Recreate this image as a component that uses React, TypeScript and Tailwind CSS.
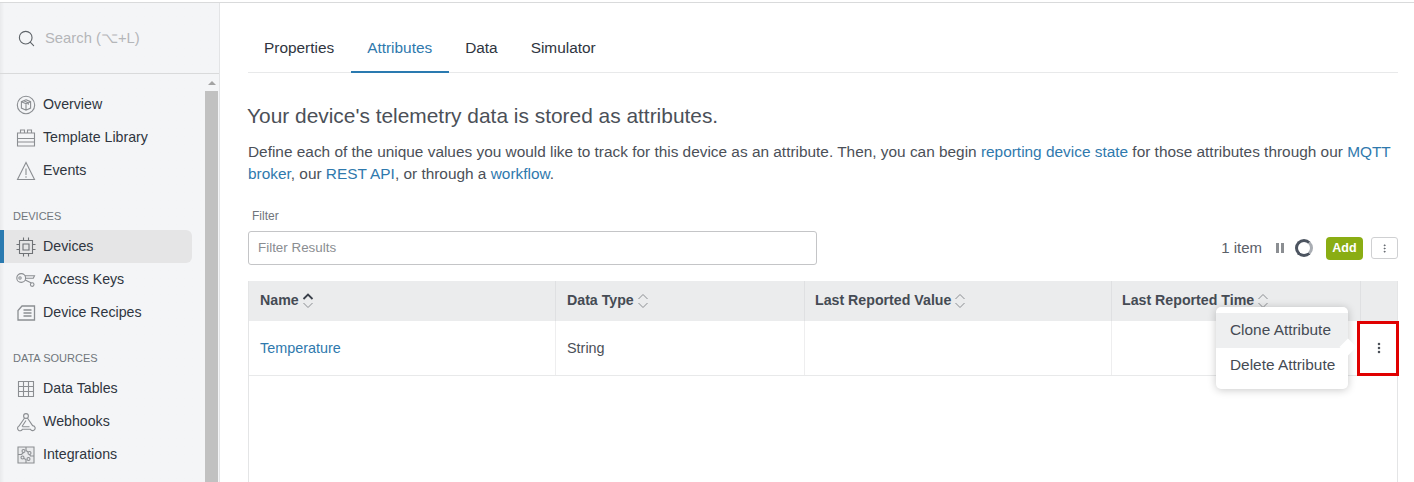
import React from 'react';
import { MoreVertical, Search } from 'lucide-react';

const stroke = { fill: 'none', stroke: 'currentColor', strokeWidth: 1.1 };

const icons: Record<string, React.ReactNode> = {
  overview: (
    <g {...stroke}>
      <circle cx="10" cy="10" r="8.7" />
      <path d="M10 4.8l4.6 1.9v6.4L10 15.2l-4.6-2.1V6.7zM5.4 6.7l4.6 2 4.6-2M10 8.7v6.5M7.7 5.8l4.6 2v2" />
    </g>
  ),
  template: (
    <g {...stroke}>
      <path d="M1.5 5h17v5.5h-17zM1.5 10.5h17v7.5h-17zM1.5 14h17M4.5 5V2h4v3M11.5 5V2h4v3" />
    </g>
  ),
  events: (
    <g {...stroke}>
      <path d="M10 1.5L1.5 18.5h17zM10 7.5v6.5M10 15.3v1.4" />
    </g>
  ),
  devices: (
    <g {...stroke}>
      <path d="M3.5 3.5h13v13h-13zM7 7h6v6H7zM7.5 .5v3M12.5 .5v3M7.5 16.5v3M12.5 16.5v3M.5 7.5h3M.5 12.5h3M16.5 7.5h3M16.5 12.5h3" />
    </g>
  ),
  keys: (
    <g {...stroke}>
      <circle cx="5.2" cy="8" r="4.4" />
      <circle cx="4" cy="8" r="1.2" />
      <path d="M9 5.8h9.5l-1.2 2.4H9.6M9.2 10l6.2 3" />
      <circle cx="16.2" cy="14.6" r="1.8" />
    </g>
  ),
  recipes: (
    <g {...stroke} strokeWidth={1.3}>
      <path d="M6 3h12.5v14H2V7.5zM7.5 7h8M7.5 10h8M7.5 13h8" />
    </g>
  ),
  tables: (
    <g {...stroke}>
      <path d="M2.5 2.5h15v15h-15zM2.5 7.5h15M2.5 12.5h15M7.5 2.5v15M12.5 2.5v15" />
    </g>
  ),
  webhooks: (
    <g {...stroke}>
      <circle cx="10" cy="4" r="2.4" />
      <path d="M8.6 6L3 14a2.5 2.5 0 1 0 3.4 3.2h8a2.5 2.5 0 1 0 2.2-3.6L11.4 6M10 8.5L6 14.5M13.5 14.8H6.5" />
    </g>
  ),
  integrations: (
    <g {...stroke}>
      <path d="M2 2h16v16H2z" fill="#e9eaec" />
      <circle cx="7.5" cy="6" r="1.5" />
      <circle cx="13.5" cy="8" r="1.5" />
      <circle cx="6.5" cy="12.5" r="1.5" />
      <circle cx="12.5" cy="14" r="1.5" />
      <path d="M2 9.5h3.5l2-2M10 2v3.5l2 1.5M18 11h-3.5l-1-1.5M10 18v-3.5l-2-1" />
    </g>
  ),
};

const NavItem = ({ icon, label, active }: { icon: string; label: string; active?: boolean }) => (
  <div className={`flex h-[33px] items-center ${active ? 'border-l-[4px] border-[#2a7ab0]' : 'pl-[4px]'}`}>
    <div className={`flex h-[33px] w-[188px] items-center gap-[8px] rounded-r-md pl-[12px] ${active ? 'bg-[#e5e5e6]' : ''}`}>
      <svg viewBox="0 0 20 20" className={`h-[20px] w-[20px] shrink-0 ${active ? 'text-[#6f7276]' : 'text-[#8b8e92]'}`}>
        {icons[icon]}
      </svg>
      <span className="-ml-[1px] text-[14.2px] text-[#2f3540]">{label}</span>
    </div>
  </div>
);

const Heading = ({ children }: { children: React.ReactNode }) => (
  <div className="pl-[13px] text-[11px] uppercase leading-[14px] text-[#70757b]">{children}</div>
);

const Sort = ({ active }: { active?: boolean }) => (
  <svg viewBox="0 0 12 18" className="ml-[3px] h-[18px] w-[12px] shrink-0" fill="none">
    <path d="M1.5 7L6 2.5 10.5 7" stroke={active ? '#3a404a' : '#8b8e92'} strokeWidth={active ? 1.8 : 1} />
    <path d="M1.5 11L6 15.5 10.5 11" stroke="#8b8e92" strokeWidth="1" />
  </svg>
);

const Th = ({ className, label, active }: { className: string; label: string; active?: boolean }) => (
  <div className={`flex items-center border-r border-[#dfe0e2] text-[14.2px] font-bold text-[#454b54] ${className}`}>
    {label}
    <Sort active={active} />
  </div>
);

const Link = ({ children }: { children: React.ReactNode }) => <span className="text-[#2f79ad]">{children}</span>;

export default function App() {
  return (
    <div className="h-[482px] w-[1414px] overflow-hidden bg-white font-['Liberation_Sans',Arial,sans-serif]">
      <div className="h-[3px] border-b border-[#d9dadb]" />
      <div className="flex h-[479px]">
        <aside className="flex w-[220px] shrink-0 flex-col border-r border-[#e3e4e6] bg-gradient-to-r from-[#e9eaec] from-0% via-[#f4f5f7] via-[2%] to-[#f4f5f7]">
          <div className="flex h-[71px] shrink-0 items-center gap-[9px] border-b border-[#d9dadb] pl-[17px]">
            <Search className="h-[19px] w-[19px] text-[#5f6469]" strokeWidth={1.4} />
            <span className="text-[14.8px] text-[#b4b6b9]">Search (⌥+L)</span>
          </div>
          <div className="flex min-h-0 flex-1">
            <nav className="w-[205px] shrink-0 pt-[14px]">
              <NavItem icon="overview" label="Overview" />
              <NavItem icon="template" label="Template Library" />
              <NavItem icon="events" label="Events" />
              <div className="pb-[7px] pt-[22px]">
                <Heading>Devices</Heading>
              </div>
              <NavItem icon="devices" label="Devices" active />
              <NavItem icon="keys" label="Access Keys" />
              <NavItem icon="recipes" label="Device Recipes" />
              <div className="pb-[7px] pt-[22px]">
                <Heading>Data Sources</Heading>
              </div>
              <NavItem icon="tables" label="Data Tables" />
              <NavItem icon="webhooks" label="Webhooks" />
              <NavItem icon="integrations" label="Integrations" />
            </nav>
            <div className="w-[14px] shrink-0">
              <div className="flex h-[17px] items-center justify-center">
                <div className="h-0 w-0 border-x-[4px] border-b-[4px] border-x-transparent border-b-[#a3a3a3]" />
              </div>
              <div className="h-full w-[13px] bg-[#c1c1c1]" />
            </div>
          </div>
        </aside>

        <main className="relative min-w-0 flex-1 pl-[28px] pr-[16px]">
          <div className="mt-[23px] flex h-[47px] border-b border-[#e8e9ea] text-[15.4px] text-[#2f3540]">
            <div className="px-[16px] pt-[10px]">Properties</div>
            <div className="ml-[1px] h-[47px] border-b-[2px] border-[#2a7ab0] pl-[16px] pr-[17px] pt-[10px] text-[#2f79ad]">Attributes</div>
            <div className="px-[16px] pt-[10px]">Data</div>
            <div className="pl-[17px] pt-[10px]">Simulator</div>
          </div>

          <h2 className="-ml-[1px] mt-[29px] text-[20.9px] leading-[27px] text-[#4b5058]">Your device's telemetry data is stored as attributes.</h2>
          <p className="mt-[12px] text-[15.4px] leading-[22px] text-[#4b5058]">
            Define each of the unique values you would like to track for this device as an attribute. Then, you can begin <Link>reporting device state</Link> for those attributes through our <Link>MQTT</Link> <Link>broker</Link>, our <Link>REST API</Link>, or through a <Link>workflow</Link>.
          </p>

          <div className="mt-[24px] pl-[4px] text-[12px] leading-[14px] text-[#70757b]">Filter</div>
          <div className="mt-[8px] flex items-center justify-between">
            <div className="flex h-[34px] w-[569px] items-center rounded-[3px] border border-[#c4c5c7] pl-[9px] text-[13.4px] text-[#8a8d91]">Filter Results</div>
            <div className="flex items-center">
              <span className="text-[15px] text-[#5b6068]">1 item</span>
              <span className="ml-[14px] flex gap-[2px]">
                <span className="h-[10px] w-[3px] bg-[#8b8e92]" />
                <span className="h-[10px] w-[3px] bg-[#8b8e92]" />
              </span>
              <span className="ml-[11px] h-[18px] w-[18px] rounded-full border-[3px] border-[#4c5460] border-r-[#a9adb3]" />
              <span className="ml-[13px] flex h-[23px] w-[37px] items-center justify-center rounded-[4px] bg-[#8aad13] text-[12.5px] font-bold text-white">Add</span>
              <span className="ml-[8px] flex h-[22px] w-[27px] items-center justify-center rounded-[3px] border border-[#cfd0d2]">
                <MoreVertical className="h-[11px] w-[11px] text-[#5b6068]" strokeWidth={2} />
              </span>
            </div>
          </div>

          <div className="mt-[16px] h-[300px] border-x border-[#e4e5e6]">
            <div className="flex h-[40px] bg-[#ebeced]">
              <Th className="w-[307px] pl-[11px]" label="Name" active />
              <Th className="w-[249px] pl-[11px]" label="Data Type" />
              <Th className="w-[307px] pl-[10px]" label="Last Reported Value" />
              <Th className="w-[249px] pl-[10px]" label="Last Reported Time" />
            </div>
            <div className="flex h-[55px] border-b border-[#e8e9ea] text-[14.4px]">
              <div className="flex w-[307px] items-center border-r border-[#eeeeef] pl-[11px] pt-[2px] text-[#2f79ad]">Temperature</div>
              <div className="flex w-[249px] items-center border-r border-[#eeeeef] pl-[11px] pt-[2px] text-[#4b5058]">String</div>
              <div className="w-[307px] border-r border-[#eeeeef]" />
              <div className="w-[249px]" />
              <div className="flex flex-1 items-center justify-center">
                <MoreVertical className="h-[14px] w-[14px] text-[#4b5058]" strokeWidth={2.4} />
              </div>
            </div>
          </div>

          {/* popover menu over the table */}
          <div className="absolute left-[996px] top-[304px] w-[132px] rounded-[5px] bg-white py-[6px] text-[15.4px] text-[#454b54] shadow-[0_1px_8px_rgba(0,0,0,0.22)]">
            <div className="flex h-[35px] items-center bg-[#eeeff0] pb-[2px] pl-[14px]">Clone Attribute</div>
            <div className="flex h-[35px] items-center pb-[2px] pl-[14px]">Delete Attribute</div>
            <div className="absolute -right-[6px] top-[34px] h-[12px] w-[12px] rotate-45 bg-white" />
          </div>
          {/* red annotation box */}
          <div className="absolute left-[1137px] top-[318px] h-[55px] w-[42px] border-[3px] border-[#e00000]" />
        </main>
      </div>
    </div>
  );
}
